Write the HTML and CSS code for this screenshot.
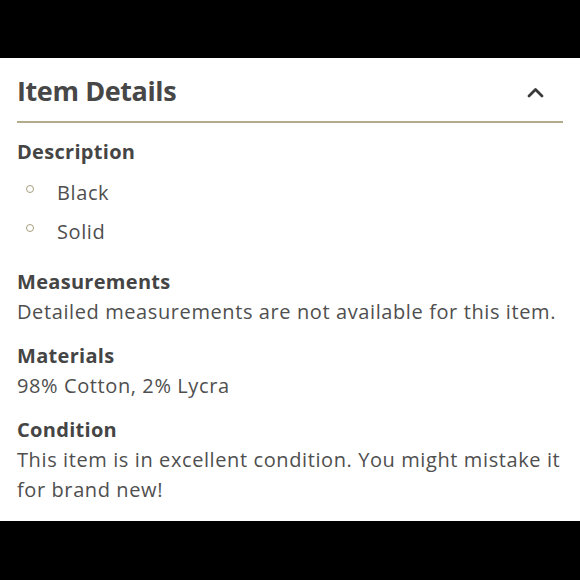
FILE: index.html
```html
<!DOCTYPE html>
<html lang="en">
<head>
<meta charset="utf-8">
<title>Item Details</title>
<link rel="stylesheet" href="styles.css">
</head>
<body>
<div class="top-bar"></div>
<main class="panel">
  <header class="panel-header">
    <h1 class="panel-title">Item Details</h1>
    <svg class="chevron" width="17" height="11" viewBox="0 0 17 11" aria-hidden="true">
      <polyline points="2,9 8.5,2.5 15,9" fill="none" stroke="#3a3a3a" stroke-width="2.8" stroke-linecap="round" stroke-linejoin="round"/>
    </svg>
  </header>
  <section class="section section-first">
    <h2 class="section-title">Description</h2>
    <ul class="bullets">
      <li class="bullet">Black</li>
      <li class="bullet">Solid</li>
    </ul>
  </section>
  <section class="section section-gap">
    <h2 class="section-title">Measurements</h2>
    <p class="section-text">Detailed measurements are not available for this item.</p>
  </section>
  <section class="section">
    <h2 class="section-title">Materials</h2>
    <p class="section-text">98% Cotton, 2% Lycra</p>
  </section>
  <section class="section">
    <h2 class="section-title">Condition</h2>
    <p class="section-text">This item is in excellent condition. You might mistake it for brand new!</p>
  </section>
</main>
</body>
</html>
```

FILE: styles.css
```css
html, body {
  margin: 0;
  padding: 0;
}

body {
  width: 580px;
  height: 580px;
  background: #000;
  font-family: "Open Sans", Lato, sans-serif;
  color: #4d4d4d;
  overflow: hidden;
}

.top-bar {
  height: 58px;
  background: #000;
}

.panel {
  background: #fff;
  padding: 0 17px 0 17px;
  height: 463px;
  box-sizing: border-box;
}

.panel-header {
  display: flex;
  align-items: center;
  justify-content: space-between;
  padding: 16px 0 13px;
  border-bottom: 2px solid #b3ab8c;
}

.panel-title {
  margin: 0;
  font-size: 27px;
  line-height: 34px;
  font-weight: 700;
  letter-spacing: -0.4px;
  color: #474747;
}

.chevron {
  display: block;
  margin-right: 19px;
  margin-top: 3px;
}

.section {
  margin-top: 14px;
}

.section-first {
  margin-top: 14px;
}

.section-gap {
  margin-top: 20px;
}

.section-title {
  margin: 0;
  font-size: 20px;
  line-height: 30px;
  font-weight: 700;
  letter-spacing: 0.3px;
  color: #454545;
}

.section-text {
  margin: 0;
  font-size: 20px;
  line-height: 30px;
  font-weight: 400;
  letter-spacing: 0.6px;
  color: #4f4f4f;
}

.bullets {
  list-style: none;
  margin: 11px 0 0;
  padding: 0;
  display: flex;
  flex-direction: column;
  gap: 9px;
}

.bullet {
  display: flex;
  align-items: flex-start;
  font-size: 20px;
  line-height: 30px;
  letter-spacing: 0.6px;
  color: #4f4f4f;
}

.bullet::before {
  content: "";
  width: 8px;
  height: 8px;
  box-sizing: border-box;
  border: 1px solid #a79f80;
  border-radius: 50%;
  margin: 7px 23px 0 9px;
  flex: none;
}
```
